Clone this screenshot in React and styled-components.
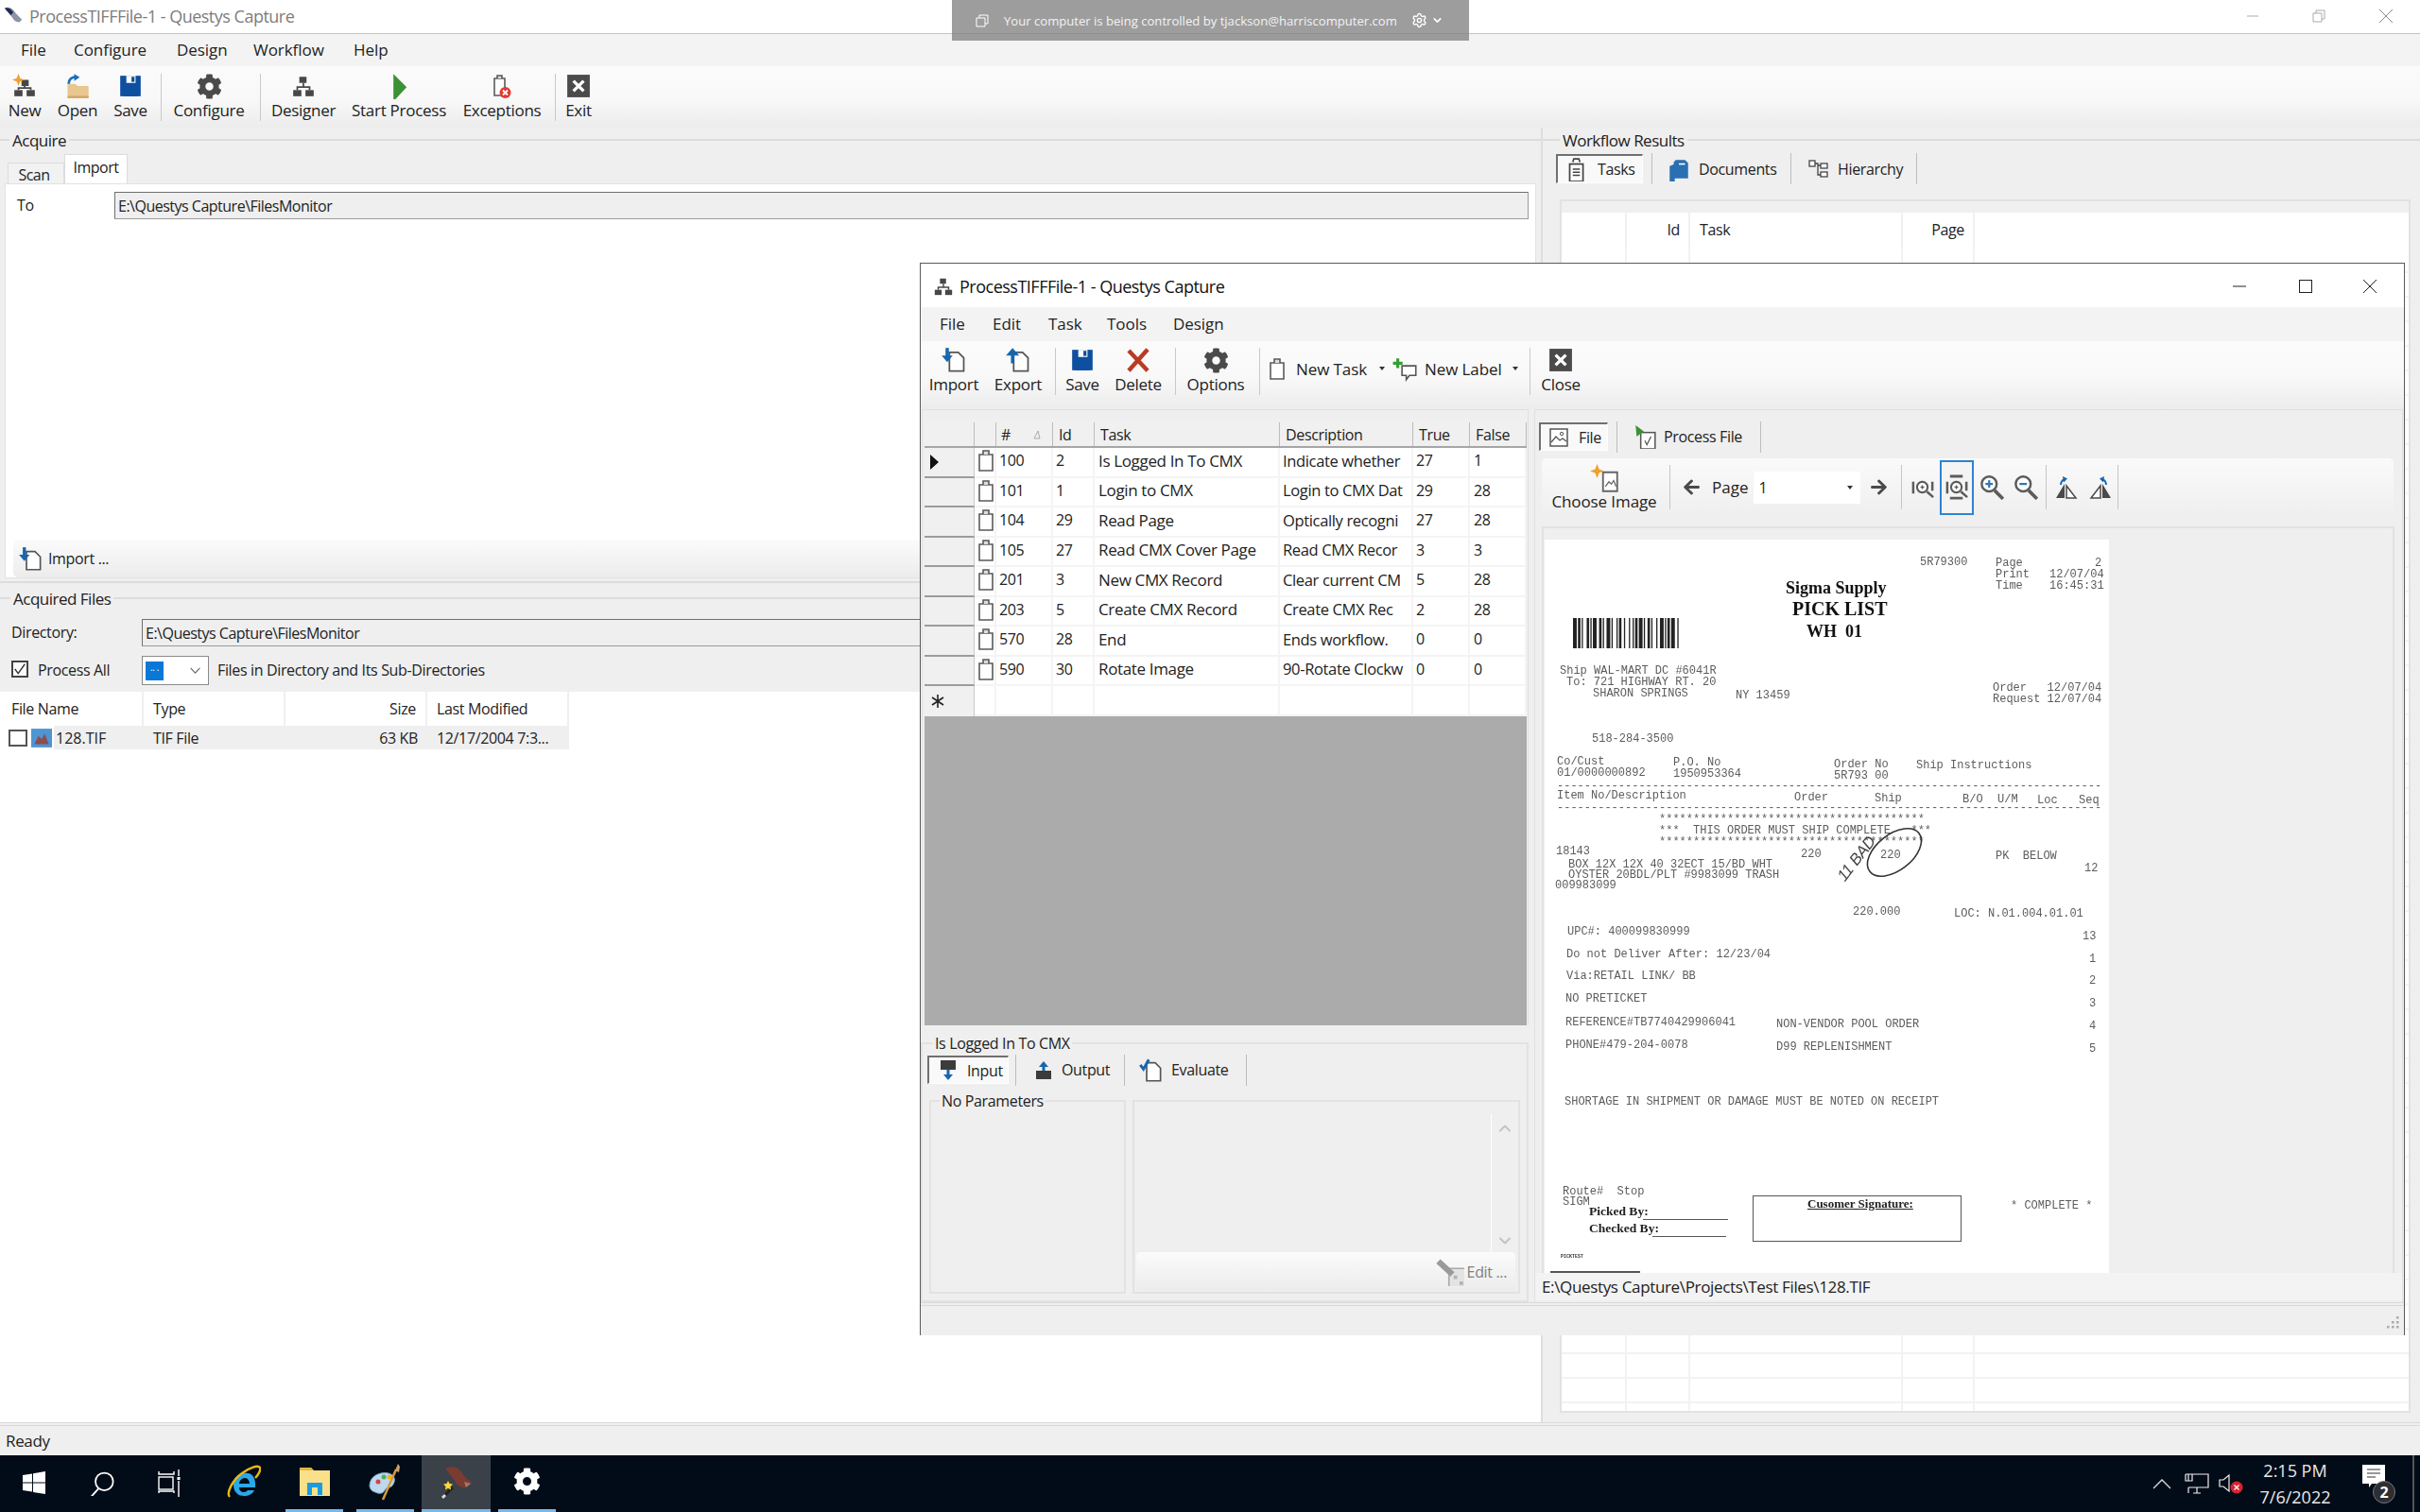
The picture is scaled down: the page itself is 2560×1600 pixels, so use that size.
import React from 'react';
import styled, { createGlobalStyle, css } from 'styled-components';
import { FaCog, FaArrowLeft, FaArrowRight } from 'react-icons/fa';
import { Settings, ChevronDown, ChevronUp } from 'lucide-react';

const UI = '"Open Sans", "Noto Sans", "Liberation Sans", sans-serif';

const Global = createGlobalStyle`
  html, body { margin: 0; padding: 0; background: #efefef; }
  * { box-sizing: border-box; }
  body { font-family: ${UI}; font-size: 17px; color: #222; letter-spacing: -0.35px; }
`;

const Screen = styled.div`
  position: relative; width: 2560px; height: 1600px; overflow: hidden;
  display: flex; flex-direction: column; background: #efefef;
`;
const MainWindow = styled.div`flex: 1; min-height: 0; display: flex; flex-direction: column;`;
const TitleBar = styled.div`
  height: 36px; flex: none; background: #fff; border-bottom: 1px solid #c4c4c4;
  display: flex; align-items: center; padding: 0 0 2px 4px; gap: 5px;
  color: ${p => p.$inactive ? '#7d7d7d' : '#111'};
`;
const TitleText = styled.span`flex: 1; font-size: 18px; letter-spacing: -0.5px;`;
const WinButtons = styled.div`display: flex; align-items: center; padding-right: ${p => p.$pr || 0}px;`;
const WinButton = styled.span`
  width: ${p => p.$w || 70}px; height: 30px; display: flex; align-items: center; justify-content: center;
`;
const MenuBar = styled.div`
  height: ${p => p.$h}px; flex: none; background: #f3f3f3; display: flex; align-items: center;
  padding: 0 0 2px ${p => p.$pad}px; font-size: 17px; letter-spacing: -0.05px;
`;
const MenuItem = styled.span`width: ${p => p.$w}px; flex: none;`;
const Toolbar = styled.div`
  height: ${p => p.$h}px; flex: none; display: flex; align-items: flex-start;
  padding-top: ${p => p.$top}px;
  background: linear-gradient(#fbfbfb 0%, #f8f8f8 55%, #ececec 100%);
`;
const ToolButton = styled.div`
  width: ${p => p.$w}px; flex: none; display: flex; flex-direction: column; align-items: center;
`;
const ToolIcon = styled.div`height: 26px; display: flex; align-items: center; justify-content: center;`;
const ToolLabel = styled.span`margin-top: 4px; line-height: 18px; font-size: 17px; letter-spacing: -0.28px; white-space: nowrap;`;
const ToolSep = styled.div`
  width: ${p => p.$w}px; flex: none; height: 50px; display: flex; justify-content: center;
  &::after { content: ''; width: 1px; height: 100%; background: #c9c9c9; }
`;
const InlineTool = styled.div`
  width: ${p => p.$w}px; flex: none; display: flex; align-items: center; height: 38px; margin-top: 3px;
  padding-left: ${p => p.$pad}px; gap: ${p => p.$gap}px; font-size: 17px; letter-spacing: -0.1px;
`;
const Caret = styled.span`
  width: 0; height: 0; border-left: 3.5px solid transparent; border-right: 3.5px solid transparent;
  border-top: 4px solid #333; margin-left: ${p => p.$ml || 0}px;
`;

/* Main workspace */
const Workspace = styled.div`flex: 1; min-height: 0; display: grid; grid-template-columns: 1630px 1fr;`;
const LeftPane = styled.div`display: flex; flex-direction: column; min-height: 0; border-right: 2px solid #dedede; width: 1632px;`;
const RightPane = styled.div`display: flex; flex-direction: column; min-height: 0; padding-left: 2px;`;
const GroupTitle = styled.div`
  height: ${p => p.$h}px; flex: none; display: flex; align-items: center; gap: 3px; font-size: 17px; letter-spacing: -0.5px;
  &::before { content: ''; width: ${p => p.$lead}px; height: 2px; background: #dcdcdc; flex: none; }
  &::after { content: ''; flex: 1; height: 2px; background: #dcdcdc; }
`;
const TabRow = styled.div`display: flex; align-items: flex-end; height: 33px; flex: none; padding-left: 8px;`;
const ClassicTab = styled.div`
  height: ${p => p.$active ? 31 : 22}px; width: ${p => p.$w}px; text-align: center; font-size: 16px; line-height: ${p => p.$active ? 27 : 24}px;
  padding-right: ${p => p.$active ? 0 : 4}px;
  background: ${p => p.$active ? '#fff' : '#f2f2f2'}; border: 1px solid #dcdcdc; border-bottom: 0; letter-spacing: -0.5px;
`;
const TabBody = styled.div`
  height: 418px; flex: none; margin: 0 5px; background: #fff; border: 1px solid #e2e2e2;
  display: flex; flex-direction: column; justify-content: space-between;
  padding: 8px 7px 0 8px;
`;
const FieldRow = styled.div`display: flex; align-items: center; height: 29px; flex: none;`;
const FieldLabel = styled.span`
  width: ${p => p.$w}px; flex: none; font-size: 16px; padding: 0 0 2px ${p => p.$pl || 0}px; margin-left: ${p => p.$ml || 0}px;
`;
const PathInput = styled.div`
  flex: 1; height: 29px; background: #efefef; border: 1px solid #6f6f6f; border-bottom-color: #9a9a9a; border-right-color: #9a9a9a;
  display: flex; align-items: center; padding-left: 3px; font-size: 16px; letter-spacing: -0.5px; white-space: nowrap; overflow: hidden;
`;
const ImportStrip = styled.div`
  height: 40px; flex: none; display: flex; align-items: center; gap: 5px; padding-left: 5px; border-radius: 5px;
  background: linear-gradient(#fbfbfb, #ececec); font-size: 16px;
`;
const Splitter = styled.div`
  height: 8px; flex: none; display: flex; align-items: center;
  &::after { content: ''; flex: 1; height: 2px; background: #dcdcdc; }
`;
const SubRow = styled.div`
  display: flex; align-items: center; flex: none; height: ${p => p.$h}px; margin-top: ${p => p.$mt}px; padding: 0 13px 0 12px; font-size: 16px;
`;
const NoteText = styled.span`padding-bottom: 2px; white-space: nowrap;`;
const CheckBox = styled.span`
  width: ${p => p.$s}px; height: ${p => p.$s}px; border: 2px solid #444; background: #fff; flex: none; margin-bottom: ${p => p.$mb || 0}px;
  display: flex; align-items: center; justify-content: center;
`;
const Combo = styled.div`
  width: 71px; height: 31px; flex: none; margin: 0 9px 0 ${p => p.$ml}px; background: #fff; border: 1px solid #8a8a8a;
  display: flex; align-items: center; justify-content: space-between; padding: 0 7px 0 3px;
`;
const BlueSel = styled.span`
  width: 19px; height: 20px; background: #0a78d7; color: #fff; font-size: 10px; line-height: 8px; text-align: center; padding-top: 2px;
`;
const FileTable = styled.div`flex: 1; min-height: 0; margin-top: 7px; background: #fff; display: flex; flex-direction: column;`;
const FileRow = styled.div`display: grid; grid-template-columns: 152px 150px 150px 150px; width: 602px; height: ${p => p.$h}px; flex: none;`;
const FileCell = styled.div`
  display: flex; align-items: center; height: 100%; font-size: 16px; white-space: nowrap;
  padding: ${p => p.$right ? '0 10px 0 0' : `0 0 0 ${p.$pad || 10}px`};
  justify-content: ${p => p.$right ? 'flex-end' : 'flex-start'};
  ${p => p.$head && css`border-right: 2px solid #efefef;`}
  ${p => p.$sel && css`background: #efefef;`}
`;
const FileName = styled.div`
  display: flex; align-items: center; height: 100%; padding-left: 9px; gap: 4px; font-size: 16px; letter-spacing: 0;
  background: linear-gradient(to right, #fff 57px, #efefef 57px);
`;
const FileBox = styled(CheckBox)`border-color: #555; width: 20px; height: 18px;`;
const StatusBar = styled.div`
  height: 35px; flex: none; border-top: 4px double #d9d9d9; display: flex; align-items: center; padding-left: 6px; font-size: 17px;
`;

/* Right results */
const PressTabs = styled.div`display: flex; align-items: center; height: ${p => p.$h}px; flex: none; margin: ${p => p.$m};`;
const PressTab = styled.div`
  height: ${p => p.$h || 31}px; width: ${p => p.$w}px; flex: none; display: flex; align-items: center; gap: ${p => p.$gap || 8}px; padding-left: ${p => p.$pad}px;
  font-size: 16px; white-space: nowrap;
  ${p => p.$on && css`background: #f9f9f9; border-top: 2px solid #707070; border-left: 2px solid #707070; border-right: 1px solid #fff; border-bottom: 1px solid #fff;`}
`;
const TabDivider = styled.span`width: 1px; height: 33px; background: #bdbdbd; flex: none; margin: 0 ${p => p.$r || 0}px 0 ${p => p.$l || 0}px;`;
const ResultsGrid = styled.div`
  height: 1284px; flex: none; margin: 16px 10px 0 18px; background: #fff; border: 2px solid #e2e2e2; overflow: hidden;
`;
const ResultsBand = styled.div`height: 12px; background: #f0f0f0;`;
const ResultsHead = styled.div`display: grid; grid-template-columns: 69px 67px 225px 76px 1fr; height: 38px; background: #fff;`;
const ResultsHeadCell = styled.div`
  display: flex; align-items: center; font-size: 16px; padding: 0 ${p => p.$right ? 9 : 0}px 3px ${p => p.$right ? 0 : 10}px;
  justify-content: ${p => p.$right ? 'flex-end' : 'flex-start'};
  ${p => !p.$last && 'border-right: 2px solid #f0f0f0;'}
`;
const ResultsRow = styled.div`display: grid; grid-template-columns: 69px 67px 225px 76px 1fr; height: 26px; border-bottom: 2px solid #f2f2f2;`;
const ResultsCell = styled.div`${p => !p.$last && 'border-right: 2px solid #f2f2f2;'}`;

/* Floating window */
const FloatWindow = styled.div`
  position: absolute; left: 973px; top: 278px; width: 1571px; height: 1135px; background: #efefef;
  border: 1px solid #5a5a5a; border-bottom: 0; display: flex; flex-direction: column;
`;
const FloatTitle = styled(TitleBar)`
  height: 46px; border-bottom: 0; padding: 2px 0 0 13px; gap: 6px; color: #111;
`;
const FloatBody = styled.div`height: 945px; flex: none; display: grid; grid-template-columns: 646px 1fr;`;
const DesignerSide = styled.div`display: flex; flex-direction: column; padding-right: 3px;`;
const GridPanel = styled.div`
  height: 652px; flex: none; margin-left: 1px; border: 1px solid #e0e0e0; border-bottom: 0; padding: 13px 1px 0 2px; display: flex; flex-direction: column;
`;
const TaskGrid = styled.div`flex: none; display: flex; flex-direction: column; background: #fff;`;
const GRID_COLS = '53px 23px 60px 44px 196px 141px 60px 60px';
const TaskHead = styled.div`
  display: grid; grid-template-columns: ${GRID_COLS}; height: 27px; background: #f0f0f0; border-bottom: 2px solid #a6a6a6;
`;
const TaskHeadCell = styled.div`
  display: flex; align-items: center; justify-content: space-between; font-size: 16px; padding: 0 ${p => p.$pr || 0}px 0 ${p => p.$pl || 0}px; border-right: 1px solid #bcbcbc;
`;
const TaskRow = styled.div`display: grid; grid-template-columns: ${GRID_COLS}; height: ${p => p.$h || 31.5}px;`;
const RowHeader = styled.div`
  background: #f0f0f0; border-bottom: ${p => p.$new ? 0 : '2px solid #9c9c9c'}; border-right: 1px solid #c8c8c8;
  display: flex; align-items: center; padding-left: 6px;
`;
const TaskCell = styled.div`
  display: flex; align-items: center; font-size: ${p => p.$fs || 16}px; white-space: nowrap; overflow: hidden;
  padding: 0 0 3px ${p => p.$pl || 5}px;
  border-right: 2px solid #f4f4f4; border-bottom: 2px solid #f4f4f4;
`;
const GrayArea = styled.div`flex: 1; background: #ababab;`;
const Fieldset = styled.fieldset`
  margin: ${p => p.$m || 0}; padding: 0; min-width: 0; border: 2px solid #e2e2e2;
  height: ${p => p.$h}px; flex: none; display: block;
`;
const Legend = styled.legend`
  margin-left: ${p => p.$ml}px; padding: 0 2px; font-size: 16px; line-height: 20px;
`;
const ParamGrid = styled.div`display: grid; grid-template-columns: 208px 410px; column-gap: 7px; margin: 8px 0 0 7px;`;
const EmptyBox = styled.div`
  margin-top: 9px; height: 205px; border: 2px solid #e2e2e2; display: flex; flex-direction: column;
`;
const ScrollArea = styled.div`flex: 1; display: flex; justify-content: flex-end; padding-top: 13px;`;
const ScrollBar = styled.div`
  width: 29px; border-left: 1px solid #fff; display: flex; flex-direction: column; align-items: center; justify-content: space-between; padding: 5px 0 2px; color: #c4c4c4;
`;
const EditStrip = styled.div`
  height: 41px; flex: none; margin: 0 3px 1px 2px; border-radius: 4px; background: linear-gradient(#fbfbfb, #ececec);
  display: flex; align-items: center; justify-content: flex-end; gap: 3px; padding-right: 9px; color: #808080; font-size: 16px;
`;
const ViewerSide = styled.div`display: flex; flex-direction: column; border: 1px solid #e0e0e0; border-bottom: 0; margin: 0 1px 0 3px;`;
const ViewerStrip = styled.div`
  height: 61px; flex: none; margin: 8px 9px 0 7px; border-radius: 5px; background: linear-gradient(#fafafa, #efefef);
  display: flex; align-items: center;
`;
const ChooseBtn = styled.div`width: 135px; flex: none; display: flex; flex-direction: column; align-items: center; font-size: 17px; line-height: 20px; letter-spacing: -0.1px; padding-right: 3px;`;
const StripSep = styled.span`width: 1px; height: 47px; background: #c6c6c6; flex: none; margin: 0 ${p => p.$r || 0}px 0 ${p => p.$l || 0}px;`;
const StripGap = styled.span`width: ${p => p.$w}px; flex: none;`;
const PageText = styled.span`font-size: 17px; margin: 0 6px 0 12px; letter-spacing: 0;`;
const PageCombo = styled.div`
  width: 113px; height: 34px; background: #fff; flex: none; display: flex; align-items: center; justify-content: space-between; padding: 0 8px 0 5px; font-size: 16px;
`;
const IconBtn = styled.div`
  width: 36px; height: 58px; flex: none; display: flex; align-items: center; justify-content: center;
  ${p => p.$on && css`border: 2px solid #2d84d2; background: #f4f4f4;`}
`;
const ImagePanel = styled.div`
  height: 790px; flex: none; margin: 11px 8px 0 7px; border: 2px solid #e2e2e2; border-bottom: 0; padding: 12px 0 0 1px; display: flex; overflow: hidden;
`;
const PathLine = styled.div`height: 29px; flex: none; padding-left: 7px; font-size: 17px; display: flex; align-items: center; background: #f3f3f3; letter-spacing: -0.35px;`;
const FloatFoot = styled.div`
  flex: 1; border-top: 4px double #d9d9d9; display: flex; align-items: flex-end; justify-content: flex-end; padding: 0 5px 5px 0;
`;

/* Scanned document */
const DocPage = styled.div`
  position: relative; width: 597px; height: 776px; background: #fff; flex: none; filter: blur(0.45px); overflow: hidden;
`;
const DocText = styled.span.attrs(p => ({ style: { left: p.$x, top: p.$y } }))`
  position: absolute; white-space: pre; line-height: 14px; margin-top: -7px; letter-spacing: 0;
  font-family: "Liberation Mono", monospace; font-size: 12px; color: #5c5c5c;
  ${p => p.$kind === 'head' && css`font-family: "Liberation Serif", serif; font-weight: bold; font-size: 20px; color: #111; line-height: 22px; margin-top: -11px;`}
  ${p => p.$kind === 'headS' && css`font-family: "Liberation Serif", serif; font-weight: bold; font-size: 18px; color: #111; line-height: 22px; margin-top: -11px;`}
  ${p => p.$kind === 'bold' && css`font-family: "Liberation Serif", serif; font-weight: bold; font-size: 13.5px; color: #222;`}
  ${p => p.$kind === 'sign' && css`font-family: "Liberation Serif", serif; font-weight: bold; font-size: 13px; color: #222; text-decoration: underline;`}
  ${p => p.$kind === 'tiny' && css`font-size: 5px; font-weight: bold; color: #333;`}
`;
const Mark = styled.div.attrs(p => ({ style: { left: p.$x, top: p.$y, width: p.$w, height: p.$h } }))`
  position: absolute; ${p => p.$line ? 'background: #555;' : 'border: 1.5px solid #555;'}
`;
const Scrawl = styled.span`
  position: absolute; left: 303px; top: 328px; font-family: "Liberation Sans", sans-serif; font-style: italic; font-size: 17px; color: #444; transform: rotate(-52deg); letter-spacing: -0.5px;
`;
const DocSvg = styled.svg`position: absolute;`;

/* Taskbar */
const Taskbar = styled.div`height: 60px; flex: none; background: #020c18; display: flex; align-items: stretch; color: #f0f0f0;`;
const TaskSlot = styled.div`
  width: ${p => p.$w}px; margin-left: ${p => p.$ml || 0}px; flex: none; display: flex; align-items: center; justify-content: center;
  padding-bottom: 2px;
  ${p => p.$bar && 'border-bottom: 3px solid #76b9ed;'}
  ${p => p.$active && 'background: #3a4149;'}
`;
const Tray = styled.div`margin-left: auto; display: flex; align-items: center; padding-right: 7px;`;
const TrayGap = styled.span`width: ${p => p.$w}px; flex: none;`;
const Clock = styled.div`width: 100px; text-align: center; margin: 0 21px 0 3px; font-size: 18px; line-height: 28px; letter-spacing: 0; color: #e8e8e8;`;
const NotifyWrap = styled.div`position: relative; width: 30px; height: 40px; margin-right: 24px;`;
const NotifyBadge = styled.span`
  position: absolute; left: 11px; top: 17px; width: 24px; height: 24px; border-radius: 50%; background: #2b2e33; border: 1px solid #777;
  color: #fff; font-size: 16px; font-weight: bold; display: flex; align-items: center; justify-content: center;
`;
const EdgeBar = styled.span`position: absolute; left: 2552px; top: 1540px; width: 2px; height: 60px; background: #555;`;

/* Remote banner */
const Banner = styled.div`
  position: absolute; left: 1007px; top: 0; width: 547px; height: 43px; background: rgba(130,130,130,.78);
  display: flex; align-items: center; padding-left: 24px; color: #f3f3f3; font-size: 13.1px; letter-spacing: 0; gap: 15px; white-space: nowrap;
`;
const BannerIcons = styled.span`display: flex; align-items: center; gap: 4px;`;
const Flip = styled.span`display: flex; ${p => p.$flip && 'transform: scaleX(-1);'}`;

/* ===== icons ===== */
const Svg = ({ s = 24, w, h, vb = '0 0 24 24', children }) => (
  <svg width={w || s} height={h || s} viewBox={vb} fill="none">{children}</svg>
);
const Star = ({ x = 0, y = 0, c = '#f0a030', r = 4.5 }) => (
  <path d={`M${x} ${y - r}L${x + r * .28} ${y - r * .28}L${x + r} ${y}L${x + r * .28} ${y + r * .28}L${x} ${y + r}L${x - r * .28} ${y + r * .28}L${x - r} ${y}L${x - r * .28} ${y - r * .28}Z`} fill={c} />
);
const HierarchyIcon = ({ s = 26, star }) => (
  <Svg s={s}>
    <g fill="#474747">
      <rect x={star ? 9 : 8} y={star ? 6 : 3} width="7" height="6" />
      <rect x="2" y="16" width="8" height="6" /><rect x="14" y="16" width="8" height="6" />
    </g>
    <path d={star ? 'M12 12v2M6 16v-2h12v2' : 'M12 9v4M6 16v-3h12v3'} stroke="#474747" strokeWidth="1.6" />
    {star && <Star x={6} y={6} r={6} />}
  </Svg>
);
const OpenIcon = () => (
  <Svg s={28}>
    <path d="M3 10h7l2 2h10v11H3z" fill="#e8c68e" /><path d="M3 21h19v2H3z" fill="#d1a766" />
    <path d="M4 10c0-4 3-6 6-6" stroke="#1d6fb8" strokeWidth="2.4" /><path d="M9 1l5 3-5 3.500z" fill="#1d6fb8" />
  </Svg>
);
const SaveIcon = ({ s = 26 }) => (
  <Svg s={s}>
    <path d="M2 2h20v20H2z" fill="#0e4f9f" /><path d="M8 2h9v7H8z" fill="#fff" /><path d="M13 3h3v5h-3z" fill="#0e4f9f" /><path d="M5 18h14v4H5z" fill="#0e4f9f" />
  </Svg>
);
const GearIcon = ({ s = 27, c = '#4a4a4a' }) => <FaCog size={s} color={c} />;
const PlayIcon = () => <Svg s={28}><path d="M7 1l12 12L7 26z" fill="#3b9135" /></Svg>;
const ClipIcon = ({ s = 24, x }) => (
  <Svg w={x ? 28 : 18} h={s} vb={x ? '0 0 28 28' : '0 0 18 24'}>
    <path d={x ? 'M6 6h11v18H6z' : 'M2 6h14v17H2z'} fill="#fff" stroke="#5a5a5a" strokeWidth="1.6" />
    <path d={x ? 'M9 6V3h5v3' : 'M6 6V2h6v4'} stroke="#5a5a5a" strokeWidth="1.6" fill="#ddd" />
    {x && <><circle cx="17.5" cy="21" r="6" fill="#e03a34" /><path d="M15 18.500l5 5M20 18.500l-5 5" stroke="#fff" strokeWidth="1.8" /></>}
  </Svg>
);
const XBoxIcon = ({ s = 26 }) => (
  <Svg s={s}><rect x="1" y="1" width="22" height="22" fill="#4b4b4b" /><path d="M7 7l10 10M17 7L7 17" stroke="#fff" strokeWidth="3" /></Svg>
);
const DocShape = ({ x = 8, y = 5 }) => (
  <path d={`M${x} ${y}h8l5 5v12h-13z`} fill="#fff" stroke="#555" strokeWidth="1.5" />
);
const ImportIcon = ({ s = 28 }) => (
  <Svg s={s}><DocShape /><path d="M6 1v8" stroke="#1566b1" strokeWidth="3" /><path d="M1 8h10l-5 6z" fill="#1566b1" /></Svg>
);
const ExportIcon = () => (
  <Svg s={28}><DocShape /><path d="M7 7v8" stroke="#1566b1" strokeWidth="3" /><path d="M1 8h12L7 1z" fill="#1566b1" /></Svg>
);
const DeleteIcon = () => <Svg s={30}><path d="M4 4l16 17M20 3L4 21" stroke="#b83c24" strokeWidth="3.6" /></Svg>;
const LabelIcon = () => (
  <Svg s={27}>
    <path d="M9 9h13v9h-6l-3 4v-4H9z" fill="#fff" stroke="#555" strokeWidth="1.4" />
    <path d="M5 2v9M0.5 6.500h9" stroke="#35a030" strokeWidth="2.8" />
  </Svg>
);
const PictureIcon = ({ s = 24 }) => (
  <Svg s={s}><rect x="3" y="3" width="18" height="18" fill="#fff" stroke="#555" strokeWidth="1.5" /><path d="M4 17l5-6 4 4 3-2 4 3" stroke="#555" strokeWidth="1.3" /><circle cx="15" cy="8" r="1.7" stroke="#555" /></Svg>
);
const ProcessFileIcon = () => (
  <Svg s={26}><rect x="8" y="8" width="14" height="16" fill="#fff" stroke="#555" strokeWidth="1.4" /><path d="M12 16l2 4 4-8" stroke="#555" strokeWidth="1.2" /><path d="M3 1l8 6-7 5z" fill="#3b9135" /></Svg>
);
const ChooseIcon = () => (
  <Svg s={30}>
    <path d="M11 7h12v16H11z" fill="#fff" stroke="#666" strokeWidth="1.5" />
    <path d="M13 19l3-4 2 2 2-3 2 5" stroke="#666" /><Star x={6} y={6} r={6} />
  </Svg>
);
const MagFit = ({ wide }) => (
  <Svg s={27} vb="0 0 28 28">
    {wide && <path d="M6 2h14M6 26h14" stroke="#5c5c5c" strokeWidth="3" />}
    <path d="M3 8v13" stroke="#5c5c5c" strokeWidth="2.6" />
    <circle cx="13" cy="14" r="5.800" stroke="#5c5c5c" strokeWidth="2.2" fill="#fff" /><path d="M11 14h4M13 12v4" stroke="#5c5c5c" strokeWidth="1.4" />
    <path d="M24 8v10M18 19l7 6" stroke="#5c5c5c" strokeWidth="2.6" />
  </Svg>
);
const MagGlass = ({ plus }) => (
  <Svg s={27}>
    <circle cx="10" cy="9" r="7" stroke="#5c5c5c" strokeWidth="2.2" fill="#fff" />
    <path d="M15 15l8 8" stroke="#5c5c5c" strokeWidth="3.2" />
    <path d="M6.500 9h7" stroke="#2f75b5" strokeWidth="2" />{plus && <path d="M10 5.500v7" stroke="#2f75b5" strokeWidth="2" />}
  </Svg>
);
const RotateIcon = ({ flip }) => (
  <Flip $flip={flip}>
    <Svg s={24}>
      <path d="M1 23L10 8v15z" fill="#4a4a4a" /><path d="M12 10l10 13H12z" fill="#fff" stroke="#4a4a4a" strokeWidth="1.5" />
      <path d="M6 9c0-3 2-5 4-6" stroke="#1566b1" strokeWidth="2" /><path d="M8 0l5 2.500L9 6.500z" fill="#1566b1" />
    </Svg>
  </Flip>
);
const TasksIcon = () => (
  <Svg s={26}><rect x="6" y="7" width="13" height="17" fill="#fff" stroke="#444" strokeWidth="1.6" /><path d="M9 5l1-3h5l1 3" stroke="#444" strokeWidth="1.5" /><path d="M9 12h7M9 15h7M9 18h7" stroke="#444" strokeWidth="1.4" /></Svg>
);
const DocumentsIcon = () => (
  <Svg s={26}><path d="M3 9l5-2v17H3z" fill="#2a6fb2" /><path d="M9 3h9l3 3v15H7V5z" fill="#2a6fb2" /><path d="M12 7h6" stroke="#fff" strokeWidth="1.5" /></Svg>
);
const TreeIcon = () => (
  <Svg s={24}><g stroke="#444" strokeWidth="1.3" fill="#fff"><rect x="2" y="3" width="6" height="6" /><rect x="14" y="6" width="7" height="5" /><rect x="14" y="15" width="7" height="5" /></g><path d="M8 6h3v12h3M11 8h3" stroke="#444" strokeWidth="1.3" /></Svg>
);
const InputIcon = () => (
  <Svg s={24}><rect x="4" y="1" width="16" height="10" fill="#3c3c3c" /><path d="M12 11v7" stroke="#1566b1" strokeWidth="3" /><path d="M7 16h10l-5 6z" fill="#1566b1" /></Svg>
);
const OutputIcon = () => (
  <Svg s={24}><rect x="4" y="13" width="16" height="9" fill="#3c3c3c" /><path d="M12 8v5" stroke="#1566b1" strokeWidth="3" /><path d="M7 9h10l-5-6z" fill="#1566b1" /></Svg>
);
const EvaluateIcon = () => (
  <Svg s={27}><DocShape /><path d="M2 7l3 4 5-9" stroke="#1566b1" strokeWidth="2.6" /></Svg>
);
const EditIcon = () => (
  <Svg s={30}>
    <path d="M11 9h16v20H11z" fill="#e3e3e3" stroke="#aaa" strokeWidth="1.3" /><path d="M15 15h3v3h-3zM20 20h3v3h-3z" fill="#b3b3b3" /><path d="M2 3l12 11" stroke="#9a9a9a" strokeWidth="5" />
  </Svg>
);
const Triangle = () => <Svg w={9} h={16} vb="0 0 9 16"><path d="M0 0l9 8-9 8z" fill="#111" /></Svg>;
const SortMark = () => <Svg w={9} h={10} vb="0 0 9 10"><path d="M6 1L2 9h6z" fill="none" stroke="#aaa" /></Svg>;
const Asterisk = () => <Svg s={16} vb="0 0 16 16"><path d="M8 1v14M2 4l12 8M14 4L2 12" stroke="#222" strokeWidth="1.6" /></Svg>;
const FileThumb = () => (
  <Svg s={22} vb="0 0 20 20"><rect width="20" height="18" y="1" fill="#4f95d2" /><path d="M3 16l4-8 3 3 3-5 4 10z" fill="#8a4f4f" /></Svg>
);
const CheckMark = () => <Svg s={14}><path d="M3 12l6 8L21 3" stroke="#333" strokeWidth="2.4" /></Svg>;
const SmallChevron = () => <Svg s={13}><path d="M3 7l9 10 9-10" stroke="#666" strokeWidth="2" /></Svg>;
const FeatherLogo = () => (
  <Svg s={22}><path d="M1 3c5-3 10 1 13 6l7 7-3 3c-5 0-6-2-8-5z" fill="#8c93a6" /><path d="M1 3c4-2 8 1 10 5l-3 3z" fill="#1f2a55" /></Svg>
);
const RestoreGlyph = ({ c }) => (
  <Svg s={16} vb="0 0 16 16"><path d="M2 5h9v9H2zM5 5V2h9v9h-3" stroke={c} fill="none" /></Svg>
);

const WinLogo = () => <Svg s={24}><path d="M0 4l10-1.500V11.500H0zM11 2.300L24 0v11.500H11zM0 12.500h10V21.500L0 20zM11 12.500h13V24l-13-2z" fill="#fff" /></Svg>;
const SearchGlyph = () => <Svg s={28}><circle cx="14" cy="11" r="8" stroke="#fff" strokeWidth="1.5" /><path d="M9 17L1 26" stroke="#fff" strokeWidth="1.6" /></Svg>;
const TaskView = () => (
  <Svg w={26} h={30} vb="0 0 26 30">
    <path d="M1 3v3h16V3M1 26v-2h16v2" stroke="#fff" strokeWidth="1.4" /><rect x="1" y="9" width="15" height="13" stroke="#fff" strokeWidth="1.4" />
    <path d="M22 1v7M22 13v17" stroke="#fff" strokeWidth="1.4" /><rect x="20.500" y="9" width="3" height="3" fill="#fff" />
  </Svg>
);
const IELogo = () => (
  <Svg s={38} vb="0 0 38 38">
    <path d="M24 9c-9-1-15 4-15 12s5 12 11 12c5 0 9-2 11-6h-7c-1 1-2 2-4 2-3 0-5-2-5-5h17c1-9-3-15-8-15zm-9 11c0-3 3-6 6-6s5 3 5 6z" fill="#2aa8e8" />
    <path d="M5 34C1 30 8 16 18 9 26 3 35 0 37 3c1 2-1 7-5 11" stroke="#eab90f" strokeWidth="2.4" />
  </Svg>
);
const FolderLogo = () => (
  <Svg s={34} vb="0 0 34 34">
    <path d="M1 2h12l3 3h17v27H1z" fill="#fbe08a" /><path d="M1 2h12l2 3H1z" fill="#e0b542" />
    <path d="M9 31V18h16v13h-5v-8h-6v8z" fill="#1a9ce0" />
  </Svg>
);
const PaintLogo = () => (
  <Svg s={40} vb="0 0 40 40">
    <path d="M3 24C3 14 14 9 23 11c7 2 8 8 4 13-2 3-6 1-8 5-2 4-6 4-10 2-4-1-6-4-6-7z" fill="#bcd9ef" stroke="#7ba6c8" />
    <circle cx="12" cy="20" r="2.500" fill="#e04040" /><circle cx="18" cy="15" r="2.500" fill="#50b050" /><circle cx="24" cy="15" r="2.500" fill="#f2b022" />
    <path d="M17 39L31 7" stroke="#d89a3c" strokeWidth="2.500" /><path d="M30 8l3-7 2 3-1 6z" fill="#c9a26a" />
  </Svg>
);
const QuestysLogo = () => (
  <Svg s={40} vb="0 0 40 40">
    <path d="M8 6c8-4 16-1 19 7l9 8-6 5c-6 1-10-3-12-7C15 14 11 10 8 6z" fill="#7a3c32" />
    <path d="M28 20l7 2-5 4z" fill="#a3786a" />
    <path d="M5 37l11-11" stroke="#222" strokeWidth="3" /><path d="M5 37l3-3" stroke="#ddd" strokeWidth="3" />
    <path d="M11 19l1.500 3 3.500.500-2.500 2.500.500 3.500-3-1.700-3 1.700.500-3.500L6 22.500l3.500-.500z" fill="#ffd935" />
  </Svg>
);

/* ===== data ===== */
const TASKS = [
  ['100', '2', 'Is Logged In To CMX', 'Indicate whether', '27', '1'],
  ['101', '1', 'Login to CMX', 'Login to CMX Dat', '29', '28'],
  ['104', '29', 'Read Page', 'Optically recogni', '27', '28'],
  ['105', '27', 'Read CMX Cover Page', 'Read CMX Recor', '3', '3'],
  ['201', '3', 'New CMX Record', 'Clear current CM', '5', '28'],
  ['203', '5', 'Create CMX Record', 'Create CMX Rec', '2', '28'],
  ['570', '28', 'End', 'Ends workflow.', '0', '0'],
  ['590', '30', 'Rotate Image', '90-Rotate Clockw', '0', '0'],
];
const PX = 1634, PY = 572;
const D = (x, y, t, kind) => ({ x: x - PX, y: y - PY, t, kind });
const DASH = '-'.repeat(80);
const STARS = '*'.repeat(39);
const DOC = [
  D(2031, 596, '5R79300'), D(2111, 597, 'Page'), D(2216, 597, '2'),
  D(2111, 609, 'Print'), D(2168, 609, '12/07/04'), D(2111, 621, 'Time'), D(2168, 621, '16:45:31'),
  D(1889, 623, 'Sigma Supply', 'headS'), D(1896, 645, 'PICK LIST', 'head'), D(1911, 669, 'WH  01', 'headS'),
  D(1650, 711, 'Ship WAL-MART DC #6041R'), D(1657, 723, 'To: 721 HIGHWAY RT. 20'), D(1685, 735, 'SHARON SPRINGS'), D(1836, 737, 'NY 13459'),
  D(2108, 729, 'Order   12/07/04'), D(2108, 741, 'Request 12/07/04'),
  D(1684, 783, '518-284-3500'),
  D(1647, 807, 'Co/Cust'), D(1770, 808, 'P.O. No'), D(1940, 810, 'Order No'), D(2027, 811, 'Ship Instructions'),
  D(1647, 819, '01/0000000892'), D(1770, 820, '1950953364'), D(1940, 822, '5R793 00'),
  D(1647, 833, DASH),
  D(1647, 843, 'Item No/Description'), D(1898, 845, 'Order'), D(1983, 846, 'Ship'), D(2076, 847, 'B/O'), D(2113, 847, 'U/M'), D(2155, 848, 'Loc'), D(2199, 848, 'Seq'),
  D(1647, 856, DASH),
  D(1755, 868, STARS), D(1755, 880, '***  THIS ORDER MUST SHIP COMPLETE   ***'), D(1755, 892, STARS),
  D(1646, 902, '18143'), D(1905, 905, '220'), D(1989, 906, '220'), D(2111, 907, 'PK  BELOW'),
  D(1659, 916, 'BOX 12X 12X 40 32ECT 15/BD WHT'), D(2205, 920, '12'),
  D(1659, 927, 'OYSTER 20BDL/PLT #9983099 TRASH'), D(1645, 938, '009983099'),
  D(1960, 966, '220.000'), D(2067, 968, 'LOC: N.01.004.01.01'),
  D(1658, 987, 'UPC#: 400099830999'), D(2203, 992, '13'),
  D(1657, 1011, 'Do not Deliver After: 12/23/04'), D(2210, 1016, '1'),
  D(1657, 1034, 'Via:RETAIL LINK/ BB'), D(2210, 1039, '2'),
  D(1656, 1058, 'NO PRETICKET'), D(2210, 1063, '3'),
  D(1656, 1083, 'REFERENCE#TB7740429906041'), D(1879, 1085, 'NON-VENDOR POOL ORDER'), D(2210, 1087, '4'),
  D(1656, 1107, 'PHONE#479-204-0078'), D(1879, 1109, 'D99 REPLENISHMENT'), D(2210, 1111, '5'),
  D(1655, 1167, 'SHORTAGE IN SHIPMENT OR DAMAGE MUST BE NOTED ON RECEIPT'),
  D(1653, 1262, 'Route#  Stop'), D(1653, 1273, 'SIGM'),
  D(1681, 1283, 'Picked By:', 'bold'), D(1681, 1301, 'Checked By:', 'bold'),
  D(1912, 1275, 'Cusomer Signature:', 'sign'),
  D(2127, 1277, '* COMPLETE *'),
  D(1651, 1331, 'PICKTEST', 'tiny'),
];
const BAR = [3,1,2,1,1,3,2,1,1,1,3,2,2,1,1,2,3,1,1,3,1,1,2,2,1,3,1,2,1,1,2,1,3,1,1,2,2,1,1,3,1,2,3,1,1,1,2,1,3,2,1,1];
let bx = 0;
const BARS = BAR.map((w, i) => { const r = { x: bx, w, on: i % 2 === 0 }; bx += w; return r; }).filter(b => b.on);

const Barcode = () => (
  <DocSvg style={{ left: 30, top: 83 }} width="113" height="32" viewBox={`0 0 ${bx} 32`} preserveAspectRatio="none">
    {BARS.map(b => <rect key={b.x} x={b.x} width={b.w} height="32" fill="#222" />)}
  </DocSvg>
);
const Scan = () => (
  <DocPage>
    {DOC.map((d, i) => <DocText key={i} $x={d.x} $y={d.y} $kind={d.kind}>{d.t}</DocText>)}
    <Barcode />
    <Scrawl>11 BAD</Scrawl>
    <DocSvg style={{ left: 335, top: 298 }} width="70" height="70" viewBox="0 0 70 70">
      <ellipse cx="35" cy="33" rx="33" ry="19" transform="rotate(-38 35 33)" stroke="#333" strokeWidth="1.6" fill="none" />
    </DocSvg>
    <Mark $x={104} $y={719} $w={90} $h={1} $line />
    <Mark $x={114} $y={737} $w={78} $h={1} $line />
    <Mark $x={220} $y={694} $w={221} $h={49} />
    <Mark $x={6} $y={774} $w={95} $h={2} $line />
  </DocPage>
);

export default function App() {
  return (
    <Screen>
      <Global />
      <MainWindow>
        <TitleBar $inactive>
          <FeatherLogo />
          <TitleText>ProcessTIFFFile-1 - Questys Capture</TitleText>
          <WinButtons>
            <WinButton><Svg s={16} vb="0 0 16 16"><path d="M2 8h12" stroke="#aaa" /></Svg></WinButton>
            <WinButton><RestoreGlyph c="#aaa" /></WinButton>
            <WinButton $w={72}><Svg s={16} vb="0 0 16 16"><path d="M1 1l14 14M15 1L1 15" stroke="#888" /></Svg></WinButton>
          </WinButtons>
        </TitleBar>
        <MenuBar $h={34} $pad={22}>
          <MenuItem $w={56}>File</MenuItem><MenuItem $w={109}>Configure</MenuItem><MenuItem $w={81}>Design</MenuItem><MenuItem $w={106}>Workflow</MenuItem><MenuItem $w={60}>Help</MenuItem>
        </MenuBar>
        <Toolbar $h={65} $top={8}>
          <ToolButton $w={52}><ToolIcon><HierarchyIcon star /></ToolIcon><ToolLabel>New</ToolLabel></ToolButton>
          <ToolButton $w={60}><ToolIcon><OpenIcon /></ToolIcon><ToolLabel>Open</ToolLabel></ToolButton>
          <ToolButton $w={52}><ToolIcon><SaveIcon /></ToolIcon><ToolLabel>Save</ToolLabel></ToolButton>
          <ToolSep $w={12} />
          <ToolButton $w={90}><ToolIcon><GearIcon /></ToolIcon><ToolLabel>Configure</ToolLabel></ToolButton>
          <ToolSep $w={18} />
          <ToolButton $w={74}><ToolIcon><HierarchyIcon /></ToolIcon><ToolLabel>Designer</ToolLabel></ToolButton>
          <ToolButton $w={128}><ToolIcon><PlayIcon /></ToolIcon><ToolLabel>Start Process</ToolLabel></ToolButton>
          <ToolButton $w={90}><ToolIcon><ClipIcon s={28} x /></ToolIcon><ToolLabel>Exceptions</ToolLabel></ToolButton>
          <ToolSep $w={22} />
          <ToolButton $w={28}><ToolIcon><XBoxIcon /></ToolIcon><ToolLabel>Exit</ToolLabel></ToolButton>
        </Toolbar>
        <Workspace>
          <LeftPane>
            <GroupTitle $h={26} $lead={10}>Acquire</GroupTitle>
            <TabRow>
              <ClassicTab $w={60}>Scan</ClassicTab>
              <ClassicTab $w={67} $active>Import</ClassicTab>
            </TabRow>
            <TabBody>
              <FieldRow>
                <FieldLabel $w={107} $pl={4}>To</FieldLabel>
                <PathInput>E:\Questys Capture\FilesMonitor</PathInput>
              </FieldRow>
              <ImportStrip><ImportIcon s={27} />Import ...</ImportStrip>
            </TabBody>
            <Splitter />
            <GroupTitle $h={26} $lead={11}>Acquired Files</GroupTitle>
            <SubRow $h={29} $mt={9}>
              <FieldLabel $w={138}>Directory:</FieldLabel>
              <PathInput>E:\Questys Capture\FilesMonitor</PathInput>
            </SubRow>
            <SubRow $h={31} $mt={10}>
              <CheckBox $s={18} $mb={3}><CheckMark /></CheckBox>
              <FieldLabel $w={109} $ml={10}>Process All</FieldLabel>
              <Combo $ml={1}><BlueSel>.. .</BlueSel><SmallChevron /></Combo>
              <NoteText>Files in Directory and Its Sub-Directories</NoteText>
            </SubRow>
            <FileTable>
              <FileRow $h={36}>
                <FileCell $head $pad={12}>File Name</FileCell>
                <FileCell $head>Type</FileCell>
                <FileCell $head $right>Size</FileCell>
                <FileCell $head>Last Modified</FileCell>
              </FileRow>
              <FileRow $h={25}>
                <FileName><FileBox $s={18} /><FileThumb />128.TIF</FileName>
                <FileCell $sel>TIF File</FileCell>
                <FileCell $sel $right>63 KB</FileCell>
                <FileCell $sel>12/17/2004 7:3...</FileCell>
              </FileRow>
            </FileTable>
          </LeftPane>
          <RightPane>
            <GroupTitle $h={26} $lead={18}>Workflow Results</GroupTitle>
            <PressTabs $h={33} $m="1px 0 0 14px">
              <PressTab $on $w={92} $pad={6} $gap={10}><TasksIcon />Tasks</PressTab>
              <TabDivider $l={9} />
              <PressTab $w={146} $pad={15} $gap={8}><DocumentsIcon />Documents</PressTab>
              <TabDivider />
              <PressTab $w={132} $pad={17}><TreeIcon />Hierarchy</PressTab>
              <TabDivider />
            </PressTabs>
            <ResultsGrid>
              <ResultsBand />
              <ResultsHead>
                <ResultsHeadCell />
                <ResultsHeadCell $right>Id</ResultsHeadCell>
                <ResultsHeadCell>Task</ResultsHeadCell>
                <ResultsHeadCell $right>Page</ResultsHeadCell>
                <ResultsHeadCell $last />
              </ResultsHead>
              {Array.from({ length: 49 }, (_, i) => (
                <ResultsRow key={i}><ResultsCell /><ResultsCell /><ResultsCell /><ResultsCell /><ResultsCell $last /></ResultsRow>
              ))}
            </ResultsGrid>
          </RightPane>
        </Workspace>
        <StatusBar>Ready</StatusBar>
      </MainWindow>

      <Taskbar>
        <TaskSlot $w={72}><WinLogo /></TaskSlot>
        <TaskSlot $w={72}><SearchGlyph /></TaskSlot>
        <TaskSlot $w={72}><TaskView /></TaskSlot>
        <TaskSlot $w={82}><IELogo /></TaskSlot>
        <TaskSlot $w={61} $ml={4} $bar><FolderLogo /></TaskSlot>
        <TaskSlot $w={61} $ml={14} $bar><PaintLogo /></TaskSlot>
        <TaskSlot $w={73} $ml={8} $bar $active><QuestysLogo /></TaskSlot>
        <TaskSlot $w={61} $ml={8} $bar><FaCog size={29} color="#fff" /></TaskSlot>
        <Tray>
          <Svg w={20} h={12} vb="0 0 20 12"><path d="M1 11l9-9 9 9" stroke="#ddd" strokeWidth="1.3" /></Svg>
          <TrayGap $w={14} />
          <Svg w={26} h={22} vb="0 0 26 22">
            <path d="M1 1h24v14H4M4 15v6M4 8V1M1 1v7h7V1M9 21h8M13 15v6" stroke="#eee" strokeWidth="1.2" />
          </Svg>
          <TrayGap $w={10} />
          <Svg w={28} h={22} vb="0 0 28 22">
            <path d="M1 7h4l6-5v17l-6-5H1z" stroke="#eee" strokeWidth="1.2" />
            <circle cx="19" cy="15" r="6.500" fill="#d9232e" /><path d="M16.500 12.500l5 5M21.500 12.500l-5 5" stroke="#fff" strokeWidth="1.3" />
          </Svg>
          <Clock>2:15 PM<br />7/6/2022</Clock>
          <NotifyWrap>
            <Svg w={24} h={24} vb="0 0 24 24"><path d="M0 0h24v20H10l-3 4v-4H0z" fill="#fff" /><path d="M5 5h14M5 9h14M5 13h9" stroke="#333" strokeWidth="1.2" /></Svg>
            <NotifyBadge>2</NotifyBadge>
          </NotifyWrap>
        </Tray>
      </Taskbar>
      <EdgeBar />

      <FloatWindow>
        <FloatTitle>
          <HierarchyIcon s={22} />
          <TitleText>ProcessTIFFFile-1 - Questys Capture</TitleText>
          <WinButtons $pr={3}>
            <WinButton><Svg s={16} vb="0 0 16 16"><path d="M1 8h14" stroke="#222" /></Svg></WinButton>
            <WinButton><Svg s={16} vb="0 0 16 16"><rect x="1.500" y="1.500" width="13" height="13" stroke="#222" /></Svg></WinButton>
            <WinButton $w={66}><Svg s={16} vb="0 0 16 16"><path d="M1 1l14 14M15 1L1 15" stroke="#222" /></Svg></WinButton>
          </WinButtons>
        </FloatTitle>
        <MenuBar $h={36} $pad={20}>
          <MenuItem $w={56}>File</MenuItem><MenuItem $w={59}>Edit</MenuItem><MenuItem $w={62}>Task</MenuItem><MenuItem $w={70}>Tools</MenuItem><MenuItem $w={60}>Design</MenuItem>
        </MenuBar>
        <Toolbar $h={72} $top={7}>
          <ToolButton $w={70}><ToolIcon><ImportIcon /></ToolIcon><ToolLabel>Import</ToolLabel></ToolButton>
          <ToolButton $w={66}><ToolIcon><ExportIcon /></ToolIcon><ToolLabel>Export</ToolLabel></ToolButton>
          <ToolSep $w={12} />
          <ToolButton $w={46}><ToolIcon><SaveIcon /></ToolIcon><ToolLabel>Save</ToolLabel></ToolButton>
          <ToolButton $w={72}><ToolIcon><DeleteIcon /></ToolIcon><ToolLabel>Delete</ToolLabel></ToolButton>
          <ToolSep $w={6} />
          <ToolButton $w={80}><ToolIcon><GearIcon /></ToolIcon><ToolLabel>Options</ToolLabel></ToolButton>
          <ToolSep $w={12} />
          <InlineTool $w={132} $pad={4} $gap={11}><ClipIcon s={28} />New Task<Caret $ml={2} /></InlineTool>
          <InlineTool $w={142} $pad={3} $gap={7}><LabelIcon />New Label<Caret $ml={4} /></InlineTool>
          <ToolSep $w={12} />
          <ToolButton $w={54}><ToolIcon><XBoxIcon /></ToolIcon><ToolLabel>Close</ToolLabel></ToolButton>
        </Toolbar>
        <FloatBody>
          <DesignerSide>
            <GridPanel>
              <TaskGrid>
                <TaskHead>
                  <TaskHeadCell /><TaskHeadCell />
                  <TaskHeadCell $pl={5} $pr={12}>#<SortMark /></TaskHeadCell>
                  <TaskHeadCell $pl={6}>Id</TaskHeadCell>
                  <TaskHeadCell $pl={6}>Task</TaskHeadCell>
                  <TaskHeadCell $pl={6}>Description</TaskHeadCell>
                  <TaskHeadCell $pl={6}>True</TaskHeadCell>
                  <TaskHeadCell $pl={6}>False</TaskHeadCell>
                </TaskHead>
                {TASKS.map((t, i) => (
                  <TaskRow key={t[0]}>
                    <RowHeader>{i === 0 && <Triangle />}</RowHeader>
                    <TaskCell $pl={3}><ClipIcon s={24} /></TaskCell>
                    <TaskCell $pl={3}>{t[0]}</TaskCell>
                    <TaskCell $pl={3}>{t[1]}</TaskCell>
                    <TaskCell $pl={4} $fs={17}>{t[2]}</TaskCell>
                    <TaskCell $pl={3} $fs={16.5}>{t[3]}</TaskCell>
                    <TaskCell $pl={3}>{t[4]}</TaskCell>
                    <TaskCell $pl={4}>{t[5]}</TaskCell>
                  </TaskRow>
                ))}
                <TaskRow $h={32}>
                  <RowHeader $new><Asterisk /></RowHeader>
                  <TaskCell /><TaskCell /><TaskCell /><TaskCell /><TaskCell /><TaskCell /><TaskCell />
                </TaskRow>
              </TaskGrid>
              <GrayArea />
            </GridPanel>
            <Fieldset $h={284} $m="9px 0 0 0">
              <Legend $ml={11}>Is Logged In To CMX</Legend>
              <PressTabs $h={30} $m="3px 0 0 5px">
                <PressTab $on $h={30} $w={86} $pad={8} $gap={8}><InputIcon />Input</PressTab>
                <TabDivider $l={7} />
                <PressTab $h={30} $w={114} $pad={17} $gap={7}><OutputIcon />Output</PressTab>
                <TabDivider />
                <PressTab $h={30} $w={128} $pad={14} $gap={8}><EvaluateIcon />Evaluate</PressTab>
                <TabDivider />
              </PressTabs>
              <ParamGrid>
                <Fieldset $h={214}>
                  <Legend $ml={9}>No Parameters</Legend>
                </Fieldset>
                <EmptyBox>
                  <ScrollArea>
                    <ScrollBar><ChevronUp size={20} strokeWidth={2.5} /><ChevronDown size={20} strokeWidth={2.5} /></ScrollBar>
                  </ScrollArea>
                  <EditStrip><EditIcon />Edit ...</EditStrip>
                </EmptyBox>
              </ParamGrid>
            </Fieldset>
          </DesignerSide>
          <ViewerSide>
            <PressTabs $h={30} $m="13px 0 0 4px">
              <PressTab $on $h={30} $w={73} $pad={7} $gap={9}><PictureIcon />File</PressTab>
              <TabDivider $l={9} />
              <PressTab $h={30} $w={151} $pad={16} $gap={7}><ProcessFileIcon />Process File</PressTab>
              <TabDivider />
            </PressTabs>
            <ViewerStrip>
              <ChooseBtn><ChooseIcon />Choose Image</ChooseBtn>
              <StripSep />
              <StripGap $w={13} />
              <FaArrowLeft size={19} color="#4a4a4a" />
              <PageText>Page</PageText>
              <PageCombo>1<Caret /></PageCombo>
              <StripGap $w={10} />
              <FaArrowRight size={19} color="#4a4a4a" />
              <StripSep $l={14} />
              <StripGap $w={4} />
              <IconBtn><MagFit /></IconBtn>
              <IconBtn $on><MagFit wide /></IconBtn>
              <IconBtn><MagGlass plus /></IconBtn>
              <IconBtn><MagGlass /></IconBtn>
              <StripSep $l={4} />
              <StripGap $w={3} />
              <IconBtn><RotateIcon /></IconBtn>
              <IconBtn><RotateIcon flip /></IconBtn>
              <StripSep />
            </ViewerStrip>
            <ImagePanel><Scan /></ImagePanel>
            <PathLine>E:\Questys Capture\Projects\Test Files\128.TIF</PathLine>
          </ViewerSide>
        </FloatBody>
        <FloatFoot>
          <Svg s={16} vb="0 0 16 16"><g fill="#aaa"><rect x="13" y="1" width="2.500" height="2.500" /><rect x="13" y="6" width="2.500" height="2.500" /><rect x="8" y="6" width="2.500" height="2.500" /><rect x="13" y="11" width="2.500" height="2.500" /><rect x="8" y="11" width="2.500" height="2.500" /><rect x="3" y="11" width="2.500" height="2.500" /></g></Svg>
        </FloatFoot>
      </FloatWindow>

      <Banner>
        <RestoreGlyph c="#fff" />
        <span>Your computer is being controlled by tjackson@harriscomputer.com</span>
        <BannerIcons><Settings size={17} color="#fff" /><ChevronDown size={13} color="#fff" strokeWidth={3} /></BannerIcons>
      </Banner>
    </Screen>
  );
}
